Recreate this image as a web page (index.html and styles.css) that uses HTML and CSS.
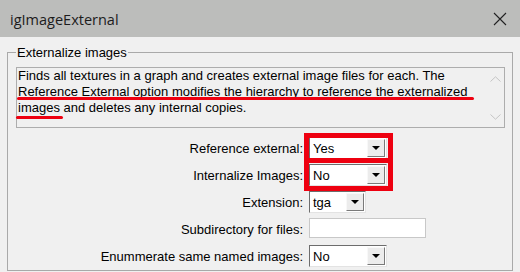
FILE: index.html
```html
<!DOCTYPE html>
<html lang="en">
<head>
  <meta charset="UTF-8" />
  <title>igImageExternal</title>
  <link rel="stylesheet" href="styles.css">
</head>
<body>
  <div class="window">
    <div class="titlebar">
      <span class="title">igImageExternal</span>
      <svg class="close" width="14" height="14" viewBox="0 0 14 14">
        <path d="M1 1 L13 13 M13 1 L1 13" stroke="#222" stroke-width="1.1" fill="none" />
      </svg>
    </div>

    <div class="client">
      <fieldset class="group">
        <legend>Externalize images</legend>

        <!-- read-only description box -->
        <div class="desc">
          <div class="desc-text">Finds all textures in a graph and creates external image files for each. The<br>Reference External option modifies the hierarchy to reference the externalized<br>images and deletes any internal copies.</div>
          <div class="scroll">
            <svg width="11" height="6" viewBox="0 0 11 6"><path d="M0.5 5.5 L5.5 0.8 L10.5 5.5" stroke="#c4c4c4" fill="none" /></svg>
            <svg width="11" height="6" viewBox="0 0 11 6"><path d="M0.5 0.5 L5.5 5.2 L10.5 0.5" stroke="#c4c4c4" fill="none" /></svg>
          </div>
          <span class="mark mark-1"></span>
          <span class="mark mark-2"></span>
        </div>

        <div class="form">
          <label>Reference external:</label>
          <div class="combo wide"><span class="value">Yes</span><span class="drop"></span></div>

          <label>Internalize Images:</label>
          <div class="combo wide"><span class="value">No</span><span class="drop"></span></div>

          <label>Extension:</label>
          <div class="combo narrow"><span class="value">tga</span><span class="drop"></span></div>

          <label>Subdirectory for files:</label>
          <div class="textbox"></div>

          <label>Enummerate same named images:</label>
          <div class="combo wide"><span class="value">No</span><span class="drop"></span></div>

          <!-- red highlight boxes -->
          <span class="hl hl-1"></span>
          <span class="hl hl-2"></span>
        </div>
      </fieldset>
    </div>
  </div>
</body>
</html>
```

FILE: styles.css
```css
body {
  margin: 0;
  padding: 0;
  background: #f0f0f0;
  font-family: "Liberation Sans", Arial, sans-serif;
  font-size: 13px;
  color: #000;
  overflow: hidden;
}

.window {
  width: 520px;
  height: 272px;
  overflow: hidden;
}

/* Title bar */
.titlebar {
  height: 37px;
  background: #bcbdbb;
  display: flex;
  align-items: center;
  justify-content: space-between;
  padding: 0 13px 0 10px;
}

.title {
  font-family: "Open Sans", "Noto Sans", sans-serif;
  font-size: 14.5px;
  color: #1c1c1c;
  margin-top: 2px;
}

.close {
  display: block;
}

/* Group box */
.client {
  padding: 8px 7px 0 7px;
}

.group {
  margin: 0;
  padding: 7px 7px 0 8px;
  border: 1px solid #a9a9a9;
  height: 226px;
  box-sizing: border-box;
  overflow: hidden;
}

.group legend {
  padding: 0 1px;
  line-height: 15px;
  font-size: 13px;
}

/* Description box */
.desc {
  position: relative;
  height: 61px;
  box-sizing: border-box;
  border: 1px solid #adadad;
  display: flex;
}

.desc-text {
  flex: 1;
  padding: 0 0 0 1px;
  line-height: 16px;
  white-space: nowrap;
}

.scroll {
  width: 17px;
  display: flex;
  flex-direction: column;
  align-items: center;
  justify-content: space-between;
  padding: 8px 0 7px;
}

.scroll svg {
  display: block;
}

.mark {
  position: absolute;
  height: 3px;
  background: #ee0010;
  border-radius: 2px;
}

.mark-1 {
  left: 0;
  top: 29px;
  width: 457px;
}

.mark-2 {
  left: -1px;
  top: 48px;
  width: 47px;
}

/* Form rows */
.form {
  position: relative;
  margin-top: 9px;
  display: grid;
  grid-template-columns: 287px auto;
  grid-auto-rows: 22px;
  column-gap: 6px;
  row-gap: 5px;
  align-items: center;
}

.form label {
  text-align: right;
}

.combo {
  height: 22px;
  box-sizing: border-box;
  background: #fff;
  border: 1px solid;
  border-color: #6d6d6d #e3e3e3 #e3e3e3 #6d6d6d;
  display: flex;
  align-items: center;
  padding: 1px;
}

.combo.wide {
  width: 78px;
}

.combo.narrow {
  width: 57px;
}

.combo .value {
  flex: 1;
  padding-left: 2px;
}

.combo .drop {
  width: 18px;
  height: 18px;
  box-sizing: border-box;
  background: #ececec;
  border: 1px solid;
  border-color: #f8f8f8 #7a7a7a #7a7a7a #f8f8f8;
  display: flex;
  align-items: center;
  justify-content: center;
}

.combo .drop::after {
  content: "";
  border-left: 4px solid transparent;
  border-right: 4px solid transparent;
  border-top: 4px solid #000;
}

.textbox {
  width: 117px;
  height: 20px;
  box-sizing: border-box;
  background: #fff;
  border: 1px solid #c8c8c8;
  align-self: start;
}

.hl {
  position: absolute;
  left: 288px;
  width: 89px;
  box-sizing: border-box;
  border: 5px solid #ee0010;
}

.hl-1 {
  top: -4px;
  height: 30px;
}

.hl-2 {
  top: 21px;
  height: 33px;
}
```
